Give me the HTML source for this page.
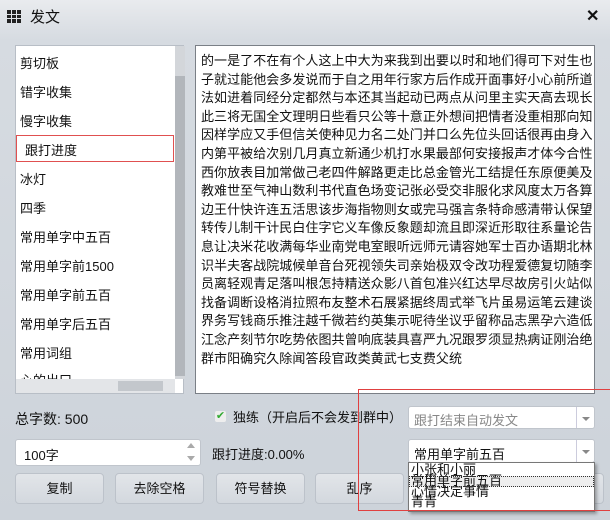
<!DOCTYPE html>
<html><head><meta charset="utf-8"><style>
*{box-sizing:border-box;margin:0;padding:0}
body{width:610px;height:520px;overflow:hidden;background:linear-gradient(#e9ebee 0,#d6dbe1 40px,#cdd3da 520px);font-family:"Liberation Sans","Noto Sans CJK SC",sans-serif;color:#111;position:relative;font-size:13px}
.a{position:absolute}
.list{left:15px;top:45px;width:169px;height:349px;background:#fff;border:1px solid #b8bec6}
.list .it{position:absolute;left:4px;font-size:13px}
.vs{left:159px;top:0;width:10px;height:333px;background:#d3d6da}
.vt{left:159px;top:30px;width:10px;height:300px;background:#b2b6bb}
.hs{left:0;top:333px;width:159px;height:14px;background:#e3e5e8}
.txt{left:195px;top:45px;width:400px;height:349px;background:#fff;border:1px solid #7a7f86;padding:6px 0 0 5px;font-size:13px;line-height:18.6px;letter-spacing:0.05px;white-space:pre}
.cb{background:#fff;border:1px solid #c0c5cc;border-radius:3px}
.arr{position:absolute;right:0;top:0;width:18px;height:100%;border-left:1px solid #ccd;}
.arr:after{content:"";position:absolute;left:5px;top:10px;border:4px solid transparent;border-top:4px solid #888}
.btn{top:473px;height:31px;width:89px;border:1px solid #bcc2ca;border-radius:4px;background:linear-gradient(#e2e5e9,#d3d8de);text-align:center;line-height:29px;font-size:13px}
</style></head><body>
<div class="a" style="left:7px;top:10px;width:14px;height:13px;display:grid;grid-template-columns:repeat(3,4px);gap:1px">
<i style="background:#222"></i><i style="background:#222"></i><i style="background:#222"></i><i style="background:#222"></i><i style="background:#222"></i><i style="background:#222"></i><i style="background:#222"></i><i style="background:#222"></i><i style="background:#222"></i></div>
<div class="a" style="left:30px;top:6px;font-size:15px">发文</div>
<div class="a" style="left:586px;top:6px;font-size:16px;font-weight:bold">✕</div>

<div class="a list">
<div class="it" style="top:7px">剪切板</div>
<div class="it" style="top:36px">错字收集</div>
<div class="it" style="top:65px">慢字收集</div>
<div class="a" style="left:0;top:89px;width:158px;height:27px;border:1px solid #e05050"></div>
<div class="it" style="top:94px;left:9px">跟打进度</div>
<div class="it" style="top:123px">冰灯</div>
<div class="it" style="top:152px">四季</div>
<div class="it" style="top:181px">常用单字中五百</div>
<div class="it" style="top:210px">常用单字前1500</div>
<div class="it" style="top:239px">常用单字前五百</div>
<div class="it" style="top:268px">常用单字后五百</div>
<div class="it" style="top:297px">常用词组</div>
<div class="it" style="top:324px;height:9px;overflow:hidden">心的出口</div>
<div class="a vs"></div><div class="a vt"></div>
<div class="a hs"><div class="a" style="left:102px;top:2px;width:45px;height:10px;background:#c3c7cc"></div></div>
</div>
<div class="a txt">的一是了不在有个人这上中大为来我到出要以时和地们得可下对生也
子就过能他会多发说而于自之用年行家方后作成开面事好小心前所道
法如进着同经分定都然与本还其当起动已两点从问里主实天高去现长
此三将无国全文理明日些看只公等十意正外想间把情者没重相那向知
因样学应又手但信关使种见力名二处门并口么先位头回话很再由身入
内第平被给次别几月真立新通少机打水果最部何安接报声才体今合性
西你放表目加常做己老四件解路更走比总金管光工结提任东原便美及
教难世至气神山数利书代直色场变记张必受交非服化求风度太万各算
边王什快许连五活思该步海指物则女或完马强言条特命感清带认保望
转传儿制干计民白住字它义车像反象题却流且即深近形取往系量论告
息让决米花收满每华业南党电室眼听远师元请容她军士百办语期北林
识半夫客战院城候单音台死视领失司亲始极双令改功程爱德复切随李
员离轻观青足落叫根怎持精送众影八首包准兴红达早尽故房引火站似
找备调断设格消拉照布友整术石展紧据终周式举飞片虽易运笔云建谈
界务写钱商乐推注越千微若约英集示呢待坐议乎留称品志黑孕六造低
江念产刻节尔吃势依图共曾响底装具喜严九况跟罗须显热病证刚治绝
群市阳确究久除闻答段官政类黄武七支费父统</div>

<div class="a" style="left:15px;top:409px;font-size:14px">总字数: 500</div>
<div class="a" style="left:215px;top:411px;width:11px;height:11px;background:#eee;border-radius:2px;color:#3a3;font-size:11px;line-height:11px;text-align:center">✔</div>
<div class="a" style="left:233px;top:407px;font-size:13px">独练（开启后不会发到群中）</div>
<div class="a cb" style="left:408px;top:406px;width:187px;height:23px"><span class="a" style="left:5px;top:3px;color:#888">跟打结束自动发文</span><div class="arr"></div></div>

<div class="a cb" style="left:15px;top:439px;width:186px;height:27px"><span class="a" style="left:8px;top:5px">100字</span>
<span class="a" style="right:5px;top:3px;border:4px solid transparent;border-bottom:5px solid #aaa;border-top:0"></span>
<span class="a" style="right:5px;top:16px;border:4px solid transparent;border-top:5px solid #aaa;border-bottom:0"></span></div>
<div class="a" style="left:212px;top:444px;font-size:13px">跟打进度:0.00%</div>
<div class="a cb" style="left:408px;top:439px;width:187px;height:24px"><span class="a" style="left:5px;top:4px">常用单字前五百</span><div class="arr"></div></div>

<div class="a btn" style="left:15px">复制</div>
<div class="a btn" style="left:115px">去除空格</div>
<div class="a btn" style="left:216px">符号替换</div>
<div class="a btn" style="left:315px">乱序</div>
<div class="a btn" style="left:415px"></div>
<div class="a btn" style="left:515px"></div>

<div class="a" style="left:408px;top:462px;width:187px;height:50px;background:#fff;border:1px solid #777;box-shadow:2px 2px 3px rgba(0,0,0,.3);font-size:13px;line-height:10.6px;overflow:hidden">
<div style="padding:2px 0 0 2px">小张和小丽</div>
<div style="padding-left:2px;background:#eee;outline:1px dotted #333;outline-offset:-1px;height:11px">常用单字前五百</div>
<div style="padding-left:2px">心情决定事情</div>
<div style="padding-left:2px">青青</div>
</div>
<div class="a" style="left:358px;top:389px;width:260px;height:122px;border:1px solid #e04040"></div>
</body></html>
